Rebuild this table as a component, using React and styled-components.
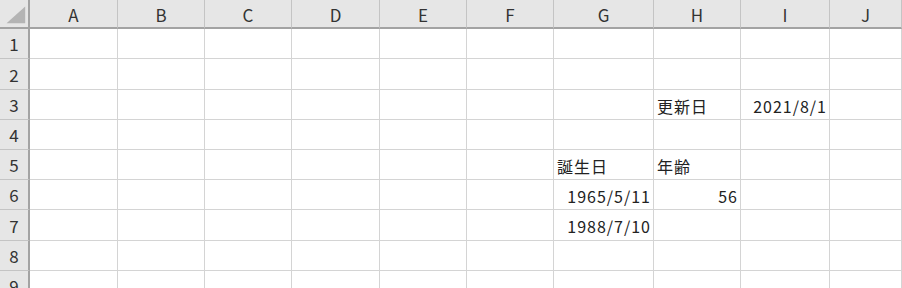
import React from 'react';
import styled, { createGlobalStyle } from 'styled-components';

const GlobalStyle = createGlobalStyle`
  html, body {
    margin: 0;
    padding: 0;
    background: #ffffff;
    overflow: hidden;
  }
`;

const COLS = ['A', 'B', 'C', 'D', 'E', 'F', 'G', 'H', 'I', 'J'];
const COL_WIDTHS = [88, 87, 87, 88, 87, 87, 100, 87, 89];
const ROW_HEIGHTS = [30, 31, 30, 30, 30, 30, 31, 30, 30];

// cell contents keyed by address
const cells = {
  H3: { text: '更新日' },
  I3: { text: '2021/8/1', align: 'right' },
  G5: { text: '誕生日' },
  H5: { text: '年齢' },
  G6: { text: '1965/5/11', align: 'right' },
  H6: { text: '56', align: 'right' },
  G7: { text: '1988/7/10', align: 'right' },
};

export default function App() {
  return (
    <>
      <GlobalStyle />
      <Sheet>
        <Corner>
          <svg width="30" height="29" viewBox="0 0 30 29">
            <polygon points="27,6 27,24 7,24" fill="#b4b4b4" />
          </svg>
        </Corner>
        {COLS.map((c) => (
          <ColHead key={c}>{c}</ColHead>
        ))}
        {ROW_HEIGHTS.map((_, r) => (
          <React.Fragment key={r}>
            <RowHead>{r + 1}</RowHead>
            {COLS.map((c) => {
              const cell = cells[`${c}${r + 1}`];
              return (
                <Cell key={c} $align={cell?.align}>
                  {cell?.text}
                </Cell>
              );
            })}
          </React.Fragment>
        ))}
      </Sheet>
    </>
  );
}

const Sheet = styled.div`
  display: grid;
  grid-template-columns: 30px ${COL_WIDTHS.map((w) => `${w}px`).join(' ')} 1fr;
  grid-template-rows: 29px ${ROW_HEIGHTS.map((h) => `${h}px`).join(' ')};
  width: 902px;
  height: 288px;
  overflow: hidden;
  font-family: 'Noto Sans CJK JP', 'Noto Sans', sans-serif;
  color: #222222;
`;

const HeadBase = styled.div`
  box-sizing: border-box;
  background: #e6e6e6;
  display: flex;
  align-items: center;
  justify-content: center;
  font-size: 17px;
  color: #333333;
`;

const Corner = styled(HeadBase)`
  border-right: 2px solid #a3a3a3;
  border-bottom: 2px solid #a3a3a3;
  align-items: flex-start;
  justify-content: flex-start;
`;

const ColHead = styled(HeadBase)`
  border-right: 1px solid #c4c4c4;
  border-bottom: 2px solid #a3a3a3;
  padding-top: 1px;
`;

const RowHead = styled(HeadBase)`
  border-right: 2px solid #a3a3a3;
  border-bottom: 1px solid #c4c4c4;
`;

const Cell = styled.div`
  box-sizing: border-box;
  border-right: 1px solid #d4d4d4;
  border-bottom: 1px solid #d4d4d4;
  display: flex;
  align-items: center;
  justify-content: ${(p) => (p.$align === 'right' ? 'flex-end' : 'flex-start')};
  padding: 2px ${(p) => (p.$align === 'right' ? '2px' : '3px')} 0 3px;
  font-size: 16px;
  letter-spacing: 1px;
  white-space: nowrap;
`;
